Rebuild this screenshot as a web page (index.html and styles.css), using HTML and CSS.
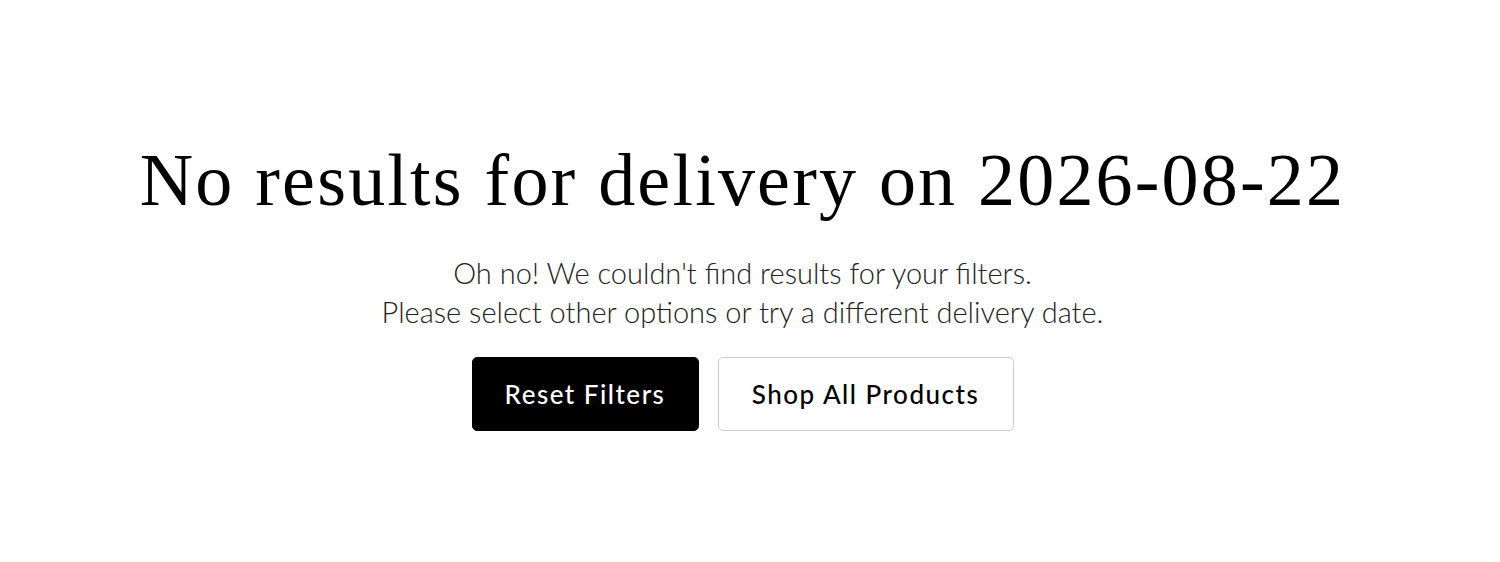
FILE: index.html
```html
<!DOCTYPE html>
<html lang="en">
<head>
  <meta charset="UTF-8">
  <meta name="viewport" content="width=device-width, initial-scale=1.0">
  <title>No results</title>
  <link rel="stylesheet" href="styles.css">
</head>
<body>
  <div class="empty-state">
    <h1>No results for delivery on 2026-08-22</h1>
    <p class="message">Oh no! We couldn't find results for your filters.<br>
      Please select other options or try a different delivery date.</p>
    <div class="actions">
      <button class="btn btn-dark">Reset Filters</button>
      <button class="btn btn-light">Shop All Products</button>
    </div>
  </div>
</body>
</html>
```

FILE: styles.css
```css
body {
  margin: 0;
  background: #fff;
  font-family: Lato, "Open Sans", sans-serif;
}
.empty-state {
  display: flex;
  flex-direction: column;
  align-items: center;
  padding: 136px 15px 0 0;
}
h1 {
  font-family: "Liberation Serif", serif;
  font-weight: 400;
  font-size: 74px;
  line-height: 88px;
  letter-spacing: 2.2px;
  color: #000;
  margin: 0;
}
.message {
  margin: 29px 0 0;
  text-align: center;
  font-size: 29px;
  line-height: 39px;
  font-weight: 300;
  color: #222;
}
.actions {
  display: flex;
  gap: 19px;
  margin-top: 26px;
}
.btn {
  height: 74px;
  padding: 0;
  border-radius: 5px;
  font-family: Lato, sans-serif;
  font-size: 26px;
  font-weight: 500;
  letter-spacing: 1.5px;
  cursor: pointer;
}
.btn-dark {
  background: #000;
  color: #fff;
  border: 1px solid #000;
  width: 227px;
}
.btn-light {
  background: #fff;
  color: #000;
  border: 1px solid #ccc;
  width: 296px;
}
```
